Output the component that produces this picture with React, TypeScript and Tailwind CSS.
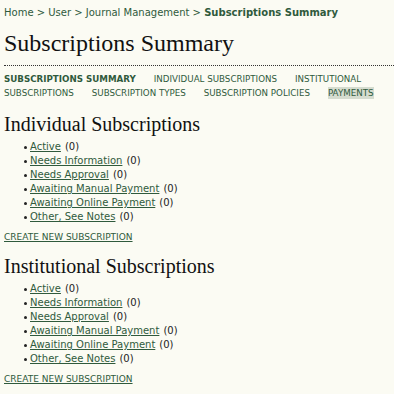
import React from 'react';

const statuses = [
  'Active',
  'Needs Information',
  'Needs Approval',
  'Awaiting Manual Payment',
  'Awaiting Online Payment',
  'Other, See Notes',
];

const navItems = [
  { label: 'SUBSCRIPTIONS SUMMARY', current: true },
  { label: 'INDIVIDUAL SUBSCRIPTIONS' },
  { label: 'INSTITUTIONAL SUBSCRIPTIONS' },
  { label: 'SUBSCRIPTION TYPES' },
  { label: 'SUBSCRIPTION POLICIES' },
  { label: 'PAYMENTS', highlight: true },
];

const SubscriptionBlock: React.FC<{ title: string; first?: boolean }> = ({ title, first }) => (
  <div>
    <h3 className={`text-[20px] leading-[24px] text-[#111] font-['Liberation_Serif',serif] ${first ? 'mt-[12px]' : 'mt-[10px]'}`}>{title}</h3>
    <ul className="mt-[4px] pl-[20px]">
      {statuses.map(s => (
        <li key={s} className="flex items-center h-[14px]">
          <span className="w-[3px] h-[3px] rounded-full bg-[#222] mr-[3px]" />
          <a href="#" className="text-[#2f5a3c] underline">{s}</a>
          <span className="ml-[4px]">(0)</span>
        </li>
      ))}
    </ul>
    <a href="#" className="block mt-[6px] text-[9px] text-[#2f5a3c] underline">CREATE NEW SUBSCRIPTION</a>
  </div>
);

export default function App() {
  return (
    <div className="min-h-[394px] bg-[#fbfbf3] px-[4px] pt-[6px] text-[10px] leading-[14px] text-[#222] font-['DejaVu_Sans',Verdana,sans-serif] overflow-hidden">
      <div className="text-[#2f5a3c]">
        Home &gt; User &gt; Journal Management &gt; <span className="font-bold">Subscriptions Summary</span>
      </div>
      <h2 className="mt-[9px] text-[24px] leading-[28px] text-[#111] font-['Liberation_Serif',serif]">Subscriptions Summary</h2>
      <div className="mt-[8px] border-t border-dotted border-[#333] w-[390px]" />
      <div className="mt-[6px] text-[8.7px] leading-[14px] text-[#2f5a3c]">
        {navItems.map((n, i) => (
          <span
            key={n.label}
            className={`${n.current ? 'font-bold' : ''} ${n.highlight ? 'bg-[#d5dccf] py-[1px]' : ''} ${i < navItems.length - 1 ? 'mr-[18px]' : ''}`}
          >
            {n.label}
          </span>
        ))}
      </div>
      <SubscriptionBlock title="Individual Subscriptions" first />
      <SubscriptionBlock title="Institutional Subscriptions" />
    </div>
  );
}
